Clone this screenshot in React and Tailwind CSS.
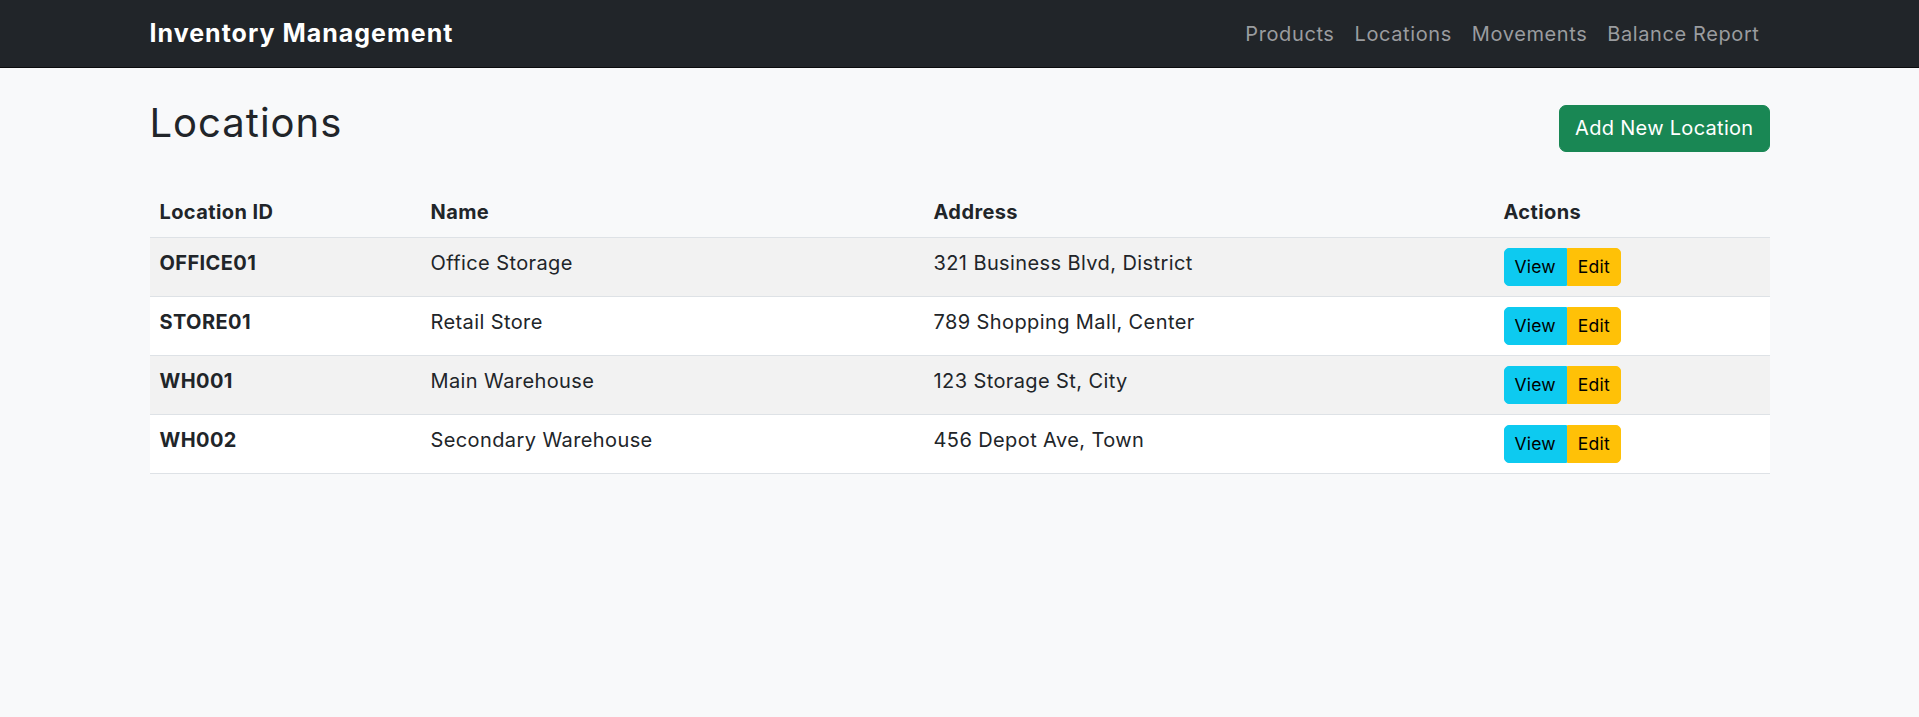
import React from 'react';

const rows = [
  { id: 'OFFICE01', name: 'Office Storage', address: '321 Business Blvd, District' },
  { id: 'STORE01', name: 'Retail Store', address: '789 Shopping Mall, Center' },
  { id: 'WH001', name: 'Main Warehouse', address: '123 Storage St, City' },
  { id: 'WH002', name: 'Secondary Warehouse', address: '456 Depot Ave, Town' },
];

const links = ['Products', 'Locations', 'Movements', 'Balance Report'];

export default function App() {
  return (
    <div className="min-h-screen bg-[#f8f9fa] text-[#212529] font-['Inter',sans-serif] text-[20px] leading-[30px] tracking-[0.4px]">
      <nav className="h-[68px] bg-[#212529] border-b border-[#0b0c0d]">
        <div className="mx-auto w-[1620px] h-full flex items-center justify-between">
          <a className="text-[25px] leading-[37px] font-bold text-white tracking-[1px]">Inventory Management</a>
          <ul className="flex items-center">
            {links.map(l => (
              <li key={l}>
                <a className="block px-[10px] text-[20px] text-[#9a9c9f] tracking-[0.6px]">{l}</a>
              </li>
            ))}
          </ul>
        </div>
      </nav>

      <main className="mx-auto w-[1620px] pt-[31px]">
        <div className="flex items-center justify-between mb-[30px]">
          <h2 className="text-[40px] leading-[48px] font-normal mb-[10px] tracking-[1px]">Locations</h2>
          <button className="h-[47px] px-[15px] rounded-[7px] bg-[#198754] border border-[#198754] text-white text-[20px] tracking-[0.3px]">
            Add New Location
          </button>
        </div>

        <table className="w-full border-collapse">
          <colgroup>
            <col className="w-[271px]" />
            <col className="w-[503px]" />
            <col className="w-[570px]" />
            <col className="w-[276px]" />
          </colgroup>
          <thead>
            <tr>
              {['Location ID', 'Name', 'Address', 'Actions'].map(h => (
                <th key={h} className="p-[10px] text-left font-bold align-top border-b border-[#dee2e6]">{h}</th>
              ))}
            </tr>
          </thead>
          <tbody>
            {rows.map((r, i) => (
              <tr key={r.id} className={i % 2 === 0 ? 'bg-[#f2f2f2]' : 'bg-white'}>
                <th className="p-[10px] text-left font-bold align-top border-b border-[#dee2e6]">{r.id}</th>
                <td className="p-[10px] align-top border-b border-[#dee2e6]">{r.name}</td>
                <td className="p-[10px] align-top border-b border-[#dee2e6]">{r.address}</td>
                <td className="p-[10px] align-top border-b border-[#dee2e6]">
                  <div className="inline-flex tracking-[0.2px]">
                    <button className="px-[10px] py-[5px] text-[17.5px] leading-[26px] bg-[#0dcaf0] border border-[#0dcaf0] text-black rounded-l-[5px]">View</button>
                    <button className="px-[10px] py-[5px] text-[17.5px] leading-[26px] bg-[#ffc107] border border-[#ffc107] text-black rounded-r-[5px]">Edit</button>
                  </div>
                </td>
              </tr>
            ))}
          </tbody>
        </table>
      </main>
    </div>
  );
}
